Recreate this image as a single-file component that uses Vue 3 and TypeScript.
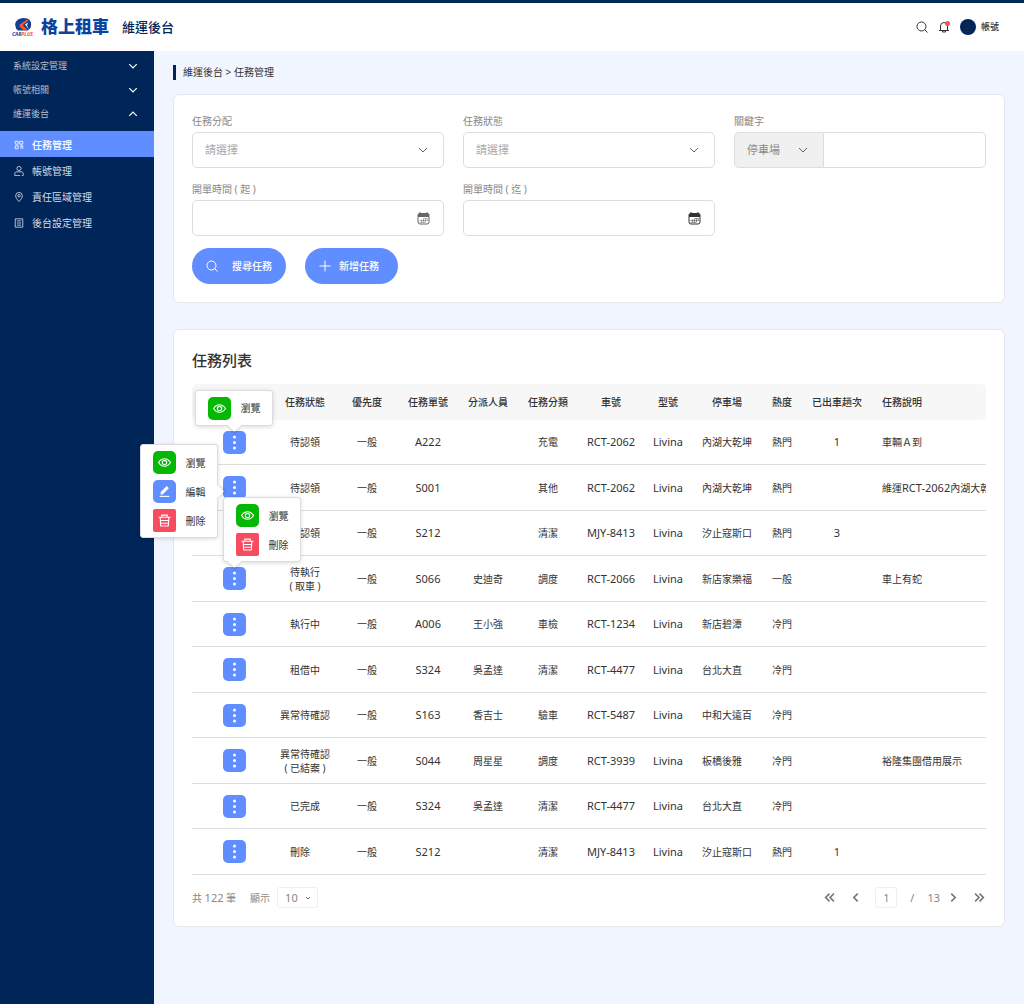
<script setup lang="ts">
import { ref } from 'vue'

type ActionKind = 'view' | 'edit' | 'remove'
type MenuSide = 'above' | 'left' | 'above-start'

interface Task {
  status: string[]
  priority: string
  no: string
  assignee: string
  category: string
  plate: string
  lot: string
  heat: string
  trips: string
  note: string
  menu?: { side: MenuSide; actions: ActionKind[] }
}

const actionLabels: Record<ActionKind, string> = { view: '瀏覽', edit: '編輯', remove: '刪除' }

const groups = [
  { label: '系統設定管理', open: false },
  { label: '帳號相關', open: false },
  { label: '維運後台', open: true },
]

const pages = [
  { label: '任務管理', icon: 'tasks' },
  { label: '帳號管理', icon: 'user' },
  { label: '責任區域管理', icon: 'pin' },
  { label: '後台設定管理', icon: 'list' },
]

const columns = [
  { key: 'action', label: '' },
  { key: 'status', label: '任務狀態' },
  { key: 'priority', label: '優先度' },
  { key: 'no', label: '任務單號' },
  { key: 'assignee', label: '分派人員' },
  { key: 'category', label: '任務分類' },
  { key: 'plate', label: '車號' },
  { key: 'model', label: '型號' },
  { key: 'lot', label: '停車場' },
  { key: 'heat', label: '熱度' },
  { key: 'trips', label: '已出車趟次' },
  { key: 'note', label: '任務說明' },
]

const tasks: Task[] = [
  { status: ['待認領'], priority: '一般', no: 'A222', assignee: '', category: '充電', plate: 'RCT-2062', lot: '內湖大乾坤', heat: '熱門', trips: '1', note: '車輛Ａ到', menu: { side: 'above', actions: ['view'] } },
  { status: ['待認領'], priority: '一般', no: 'S001', assignee: '', category: '其他', plate: 'RCT-2062', lot: '內湖大乾坤', heat: '熱門', trips: '', note: '維運RCT-2062內湖大乾', menu: { side: 'left', actions: ['view', 'edit', 'remove'] } },
  { status: ['待認領'], priority: '一般', no: 'S212', assignee: '', category: '清潔', plate: 'MJY-8413', lot: '汐止寇斯口', heat: '熱門', trips: '3', note: '' },
  { status: ['待執行', '( 取車 )'], priority: '一般', no: 'S066', assignee: '史迪奇', category: '調度', plate: 'RCT-2066', lot: '新店家樂福', heat: '一般', trips: '', note: '車上有蛇', menu: { side: 'above-start', actions: ['view', 'remove'] } },
  { status: ['執行中'], priority: '一般', no: 'A006', assignee: '王小強', category: '車檢', plate: 'RCT-1234', lot: '新店碧潭', heat: '冷門', trips: '', note: '' },
  { status: ['租借中'], priority: '一般', no: 'S324', assignee: '吳孟達', category: '清潔', plate: 'RCT-4477', lot: '台北大直', heat: '冷門', trips: '', note: '' },
  { status: ['異常待確認'], priority: '一般', no: 'S163', assignee: '香吉士', category: '驗車', plate: 'RCT-5487', lot: '中和大遠百', heat: '冷門', trips: '', note: '' },
  { status: ['異常待確認', '( 已結案 )'], priority: '一般', no: 'S044', assignee: '周星星', category: '調度', plate: 'RCT-3939', lot: '板橋後雅', heat: '冷門', trips: '', note: '裕隆集團借用展示' },
  { status: ['已完成'], priority: '一般', no: 'S324', assignee: '吳孟達', category: '清潔', plate: 'RCT-4477', lot: '台北大直', heat: '冷門', trips: '', note: '' },
  { status: ['刪除'], priority: '一般', no: 'S212', assignee: '', category: '清潔', plate: 'MJY-8413', lot: '汐止寇斯口', heat: '熱門', trips: '1', note: '' },
]

const isLatin = (part: string) => /^[\w-]+$/.test(part)
const noteParts = (note: string) => note.split(/([A-Za-z0-9-]+)/).filter(Boolean)

const assign = ref('')
const state = ref('')
const keywordType = ref('停車場')
const keyword = ref('')
const dateFrom = ref('')
const dateTo = ref('')
const pageSize = ref('10')
const page = ref('1')
</script>

<template>
  <div class="app" lang="zh-Hant">
    <header class="topbar">
      <a class="brand" href="#">
        <svg class="emblem" viewBox="0 0 46 36" aria-hidden="true">
          <path d="M7 17C4 7 13 0 23 0c11 0 17 7 15 16-1 5-4 8-8 9H12c-3-2-4-4-5-8z" fill="#123f95" />
          <path d="M30 3 17 12c-3 2-3 4-1 6l8 7h8l-9-9c-1-1-1-2 0-3l10-8z" fill="#f4591f" />
          <path d="m26 13 6-4-2 6 4 8z" fill="#fff" />
          <text x="0" y="35" font-size="10" font-weight="700" font-style="italic" fill="#123f95">CAR<tspan fill="#f4591f">PLUS</tspan></text>
        </svg>
        <span class="brand-name">格上租車</span>
        <span class="brand-sub">維運後台</span>
      </a>
      <div class="tools">
        <button type="button" class="bare" aria-label="搜尋">
          <svg class="i12" viewBox="0 0 24 24"><circle cx="11" cy="11" r="9" /><path d="m17 17 6 6" /></svg>
        </button>
        <button type="button" class="bare" aria-label="通知">
          <svg class="i12" viewBox="0 0 24 24"><path d="M2 19h20M5 19V10a7 7 0 0 1 14 0v9M9 19v3h6v-3" /><circle class="alert" cx="19" cy="5" r="5" /></svg>
        </button>
        <button type="button" class="bare account">
          <span class="avatar">
            <svg viewBox="0 0 24 24"><circle cx="12" cy="7" r="5" /><path d="M2 22v-3c0-3 2-4 5-4h10c3 0 5 1 5 4v3z" /></svg>
          </span>
          帳號
        </button>
      </div>
    </header>

    <div class="body">
      <nav class="sidebar">
        <button v-for="g in groups" :key="g.label" type="button" class="group" :aria-expanded="g.open">
          {{ g.label }}
          <svg viewBox="0 0 16 16"><path :d="g.open ? 'm2 11 6-6 6 6' : 'm2 5 6 6 6-6'" /></svg>
        </button>
        <ul class="pages">
          <li v-for="(p, i) in pages" :key="p.label">
            <a href="#" :class="['page-link', { active: i === 0 }]">
              <svg viewBox="0 0 24 24">
                <g v-if="p.icon === 'tasks'"><path d="M3 3h7v7H3zM3 14h7v7H3zM14 3h7v7h-7zM17 14v7M21 14v7M14 14h7" /></g>
                <g v-else-if="p.icon === 'user'"><circle cx="12" cy="6" r="5" /><path d="M19 23h3v-5c0-3-2-4-5-4H7c-3 0-5 1-5 4v5h13" /></g>
                <g v-else-if="p.icon === 'pin'"><path d="M12 23C7 18 4 13 4 9a8 8 0 0 1 16 0c0 4-3 9-8 14z" /><circle cx="12" cy="9" r="3" /></g>
                <g v-else><path d="M3 2h18v20H3zM7 7h10M7 12h10M7 17h10" /></g>
              </svg>
              {{ p.label }}
            </a>
          </li>
        </ul>
      </nav>

      <main class="content">
        <h1 class="crumbs">維運後台 &gt; 任務管理</h1>

        <form class="card" @submit.prevent>
          <div class="fields">
            <div class="field">
              <label for="assign">任務分配</label>
              <div class="pick">
                <select id="assign" v-model="assign"><option value="">請選擇</option></select>
                <svg viewBox="0 0 12 12"><path d="m2 4 4 4 4-4" /></svg>
              </div>
            </div>
            <div class="field">
              <label for="state">任務狀態</label>
              <div class="pick">
                <select id="state" v-model="state"><option value="">請選擇</option></select>
                <svg viewBox="0 0 12 12"><path d="m2 4 4 4 4-4" /></svg>
              </div>
            </div>
            <div class="field">
              <label for="keyword">關鍵字</label>
              <div class="combo">
                <div class="pick joined">
                  <select v-model="keywordType" aria-label="關鍵字類型"><option>停車場</option></select>
                  <svg viewBox="0 0 12 12"><path d="m2 4 4 4 4-4" /></svg>
                </div>
                <input id="keyword" v-model="keyword" type="text" />
              </div>
            </div>
            <div class="field">
              <label for="from">開單時間 ( 起 )</label>
              <div class="date">
                <input id="from" v-model="dateFrom" type="text" />
                <button type="button" class="bare" aria-label="選擇起始日期">
                  <svg viewBox="0 0 26 26"><path class="fill" d="M5 3h16a3 3 0 0 1 3 3v3H2V6a3 3 0 0 1 3-3z" /><path d="M2 9v11a4 4 0 0 0 4 4h14a4 4 0 0 0 4-4V9M6 0v4M20 0v4" /><path class="thin" d="M13 13h8M5 17h16M5 21h11M9 15v6M13 13v8M17 13v8M21 13v4" /></svg>
                </button>
              </div>
            </div>
            <div class="field">
              <label for="to">開單時間 ( 迄 )</label>
              <div class="date dark">
                <input id="to" v-model="dateTo" type="text" />
                <button type="button" class="bare" aria-label="選擇結束日期">
                  <svg viewBox="0 0 26 26"><path class="fill" d="M5 3h16a3 3 0 0 1 3 3v3H2V6a3 3 0 0 1 3-3z" /><path d="M2 9v11a4 4 0 0 0 4 4h14a4 4 0 0 0 4-4V9M6 0v4M20 0v4" /><path class="thin" d="M13 13h8M5 17h16M5 21h11M9 15v6M13 13v8M17 13v8M21 13v4" /></svg>
                </button>
              </div>
            </div>
          </div>
          <div class="buttons">
            <button type="submit" class="pill">
              <svg viewBox="0 0 24 24"><circle cx="11" cy="11" r="9" /><path d="m17 17 6 6" /></svg>
              <span>搜尋任務</span>
            </button>
            <button type="button" class="pill add">
              <svg viewBox="0 0 24 24"><path d="M12 1v22M1 12h22" /></svg>
              <span>新增任務</span>
            </button>
          </div>
        </form>

        <section class="card">
          <h2 class="title">任務列表</h2>
          <table class="tasks">
            <thead>
              <tr>
                <th v-for="c in columns" :key="c.key" :class="'col-' + c.key" scope="col">{{ c.label }}</th>
              </tr>
            </thead>
            <tbody>
              <tr v-for="(t, i) in tasks" :key="i">
                <td>
                  <div class="more-wrap">
                    <button type="button" class="more" aria-label="更多操作" :aria-expanded="!!t.menu">
                      <svg viewBox="0 0 23 23"><circle cx="11.500" cy="6" r="1.500" /><circle cx="11.500" cy="11.500" r="1.500" /><circle cx="11.500" cy="17" r="1.500" /></svg>
                    </button>
                    <div v-if="t.menu" :class="['menu', t.menu.side]">
                      <button v-for="a in t.menu.actions" :key="a" type="button" class="menu-item">
                        <span :class="['tile', a]">
                          <svg v-if="a === 'view'" viewBox="0 0 24 24"><path d="M1 12c3-5 7-7 11-7s8 2 11 7c-3 5-7 7-11 7s-8-2-11-7z" /><circle cx="12" cy="12" r="4" /></svg>
                          <svg v-else-if="a === 'edit'" viewBox="0 0 24 24"><path class="solid" d="M5 18v-5L16 2l4 4L9 17z" /><path d="M3 21h18" /></svg>
                          <svg v-else viewBox="0 0 24 24"><path d="M1 6h22M7 6V2h10v4M4 6l1 16h14l1-16M5 12h14M6 17h12" /></svg>
                        </span>
                        {{ actionLabels[a] }}
                      </button>
                    </div>
                  </div>
                </td>
                <td class="status"><span v-for="line in t.status" :key="line">{{ line }}</span></td>
                <td>{{ t.priority }}</td>
                <td class="latin">{{ t.no }}</td>
                <td>{{ t.assignee }}</td>
                <td>{{ t.category }}</td>
                <td class="latin">{{ t.plate }}</td>
                <td class="latin">Livina</td>
                <td class="lot">{{ t.lot }}</td>
                <td>{{ t.heat }}</td>
                <td class="latin">{{ t.trips }}</td>
                <td class="note"><span v-for="(part, n) in noteParts(t.note)" :key="n" :class="{ latin: isLatin(part) }">{{ part }}</span></td>
              </tr>
            </tbody>
          </table>

          <footer class="pager">
            <span>共 <span class="latin">122</span> 筆</span>
            <label for="size">顯示</label>
            <div class="pick small">
              <select id="size" v-model="pageSize"><option>10</option></select>
              <svg viewBox="0 0 8 8"><path d="m2 3 2 2 2-2" /></svg>
            </div>
            <div class="steps">
              <button type="button" class="bare" aria-label="第一頁"><svg viewBox="0 0 20 20"><path d="m10 3-7 7 7 7M18 3l-7 7 7 7" /></svg></button>
              <button type="button" class="bare prev" aria-label="上一頁"><svg viewBox="0 0 20 20"><path d="m14 3-7 7 7 7" /></svg></button>
              <input v-model="page" class="latin" type="text" aria-label="頁碼" />
              <span class="latin slash">/</span>
              <span class="latin">13</span>
              <button type="button" class="bare next" aria-label="下一頁"><svg viewBox="0 0 20 20"><path d="m6 3 7 7-7 7" /></svg></button>
              <button type="button" class="bare" aria-label="最後一頁"><svg viewBox="0 0 20 20"><path d="m2 3 7 7-7 7M10 3l7 7-7 7" /></svg></button>
            </div>
          </footer>
        </section>
      </main>
    </div>
  </div>
</template>

<style>
body {
  background: #f0f5ff;
}
</style>

<style scoped>
.app,
.app * {
  box-sizing: border-box;
}
.app {
  display: flex;
  flex-direction: column;
  min-height: 100vh;
  background: #f0f5ff;
  color: #333;
  font: 10px/14px "Noto Sans", "Noto Sans CJK TC", sans-serif;
}
button,
input,
select {
  margin: 0;
  padding: 0;
  border: 0;
  background: none;
  color: inherit;
  font: inherit;
}
button,
select {
  cursor: pointer;
}
a {
  color: inherit;
  text-decoration: none;
}
svg {
  display: block;
  flex: none;
  fill: none;
  stroke: currentColor;
  stroke-width: 2;
}
.bare {
  display: flex;
  align-items: center;
}
.app .latin {
  font-size: 11px;
}

.topbar {
  display: flex;
  align-items: center;
  justify-content: space-between;
  height: 51px;
  padding: 0 25px 0 12px;
  border-top: 3px solid #002558;
  background: #fff;
}
.brand {
  display: flex;
  align-items: center;
  line-height: 24px;
}
.emblem {
  width: 23px;
  height: 18px;
  overflow: visible;
  stroke: none;
}
.brand-name {
  margin: 0 13px 0 6px;
  color: #0a449f;
  font-size: 17px;
  font-weight: 900;
}
.brand-sub {
  color: #002558;
  font-size: 13px;
  font-weight: 500;
}
.tools {
  display: flex;
  align-items: center;
  gap: 10px;
}
.i12 {
  width: 12px;
  height: 12px;
}
.alert {
  fill: #ff4d63;
  stroke: none;
}
.account {
  gap: 5px;
  font-size: 9px;
  font-weight: 500;
}
.avatar {
  display: grid;
  place-items: center;
  width: 16px;
  height: 16px;
  border-radius: 50%;
  background: #002558;
  color: #1f2c45;
}
.avatar svg {
  width: 9px;
  height: 9px;
}

.body {
  display: flex;
  flex: 1;
}
.sidebar {
  flex: none;
  width: 154px;
  padding-top: 3px;
  background: #002558;
  color: #d5dbe6;
}
.group {
  display: flex;
  align-items: center;
  justify-content: space-between;
  width: 100%;
  height: 24px;
  padding: 0 16px 0 13px;
  color: #b3bdcc;
  font-size: 9px;
}
.group svg {
  width: 10px;
  height: 10px;
  color: #fff;
}
.pages {
  margin: 5px 0 0;
  padding: 0;
  list-style: none;
}
.page-link {
  display: flex;
  align-items: center;
  gap: 8px;
  height: 26px;
  padding: 2px 0 0 14px;
}
.page-link svg {
  width: 10px;
  height: 10px;
}
.page-link.active {
  background: #608dff;
  color: #fff;
  font-weight: 500;
}

.content {
  flex: 1;
  min-width: 0;
  padding: 14px 19px;
}
.crumbs {
  margin: 0 0 14px;
  padding-left: 7px;
  border-left: 3px solid #002558;
  font-size: 10px;
  font-weight: 400;
  line-height: 15px;
}
.card {
  margin-bottom: 26px;
  padding: 18px;
  border: 1px solid #e4e7ed;
  border-radius: 6px;
  background: #fff;
}

.fields {
  display: grid;
  grid-template-columns: repeat(3, minmax(0, 1fr));
  gap: 13px 19px;
}
.field {
  display: flex;
  flex-direction: column;
  gap: 3px;
  color: #888;
}
.field label {
  line-height: 16px;
}
.pick {
  display: grid;
  align-items: center;
}
.pick select,
.pick svg {
  grid-area: 1 / 1;
}
.pick select {
  width: 100%;
  height: 36px;
  padding: 0 12px;
  border: 1px solid #ddd;
  border-radius: 5px;
  appearance: none;
  color: #aaa;
  font-size: 11px;
}
.pick svg {
  justify-self: end;
  width: 12px;
  height: 12px;
  margin-right: 15px;
  color: #666;
  stroke-width: 1;
  pointer-events: none;
}
.combo {
  display: flex;
}
.combo input {
  flex: 1;
  min-width: 0;
  height: 36px;
  padding: 0 12px;
  border: 1px solid #ddd;
  border-left: 0;
  border-radius: 0 5px 5px 0;
}
.pick.joined {
  width: 90px;
}
.pick.joined select {
  border-radius: 5px 0 0 5px;
  background: #f0f0f0;
  color: #888;
}
.date {
  display: flex;
  align-items: center;
  height: 36px;
  padding: 0 13px 0 12px;
  border: 1px solid #ddd;
  border-radius: 5px;
  color: #666;
}
.date input {
  flex: 1;
  min-width: 0;
  height: 100%;
}
.date svg {
  width: 13px;
  height: 13px;
}
.date .fill {
  fill: currentColor;
}
.date .thin {
  stroke-width: 1;
}
.date.dark {
  color: #333;
}
.buttons {
  display: flex;
  gap: 19px;
  margin-top: 12px;
}
.pill {
  display: flex;
  align-items: center;
  gap: 14px;
  height: 36px;
  padding: 0 14px;
  border-radius: 18px;
  background: #608dff;
  color: #fff;
  font-weight: 500;
}
.pill svg {
  width: 12px;
  height: 12px;
}
.pill.add {
  gap: 8px;
  padding: 0 19px 0 14px;
}

.title {
  margin: 0 0 12px;
  font-size: 15px;
  font-weight: 500;
  line-height: 24px;
}
.tasks {
  width: 100%;
  border-spacing: 0;
  table-layout: fixed;
  text-align: center;
}
.tasks th {
  height: 36px;
  padding: 0;
  background: #f7f7f7;
  font-weight: 500;
}
.tasks th:first-child {
  border-radius: 5px 0 0 5px;
}
.tasks th:last-child {
  border-radius: 0 5px 5px 0;
}
.tasks td {
  height: 45px;
  padding: 0;
  border-bottom: 1px solid #ddd;
}
.tasks tr:nth-child(even) td {
  height: 46px;
}
.col-action { width: 84px; }
.col-status { width: 58px; }
.col-priority { width: 66px; }
.col-no { width: 56px; }
.col-assignee { width: 64px; }
.col-category { width: 56px; }
.col-plate { width: 70px; }
.col-model { width: 44px; }
.col-lot { width: 74px; }
.col-heat { width: 36px; }
.col-trips { width: 74px; }
.tasks .col-note,
.tasks .note {
  padding-left: 8px;
  text-align: left;
}
.tasks .note {
  overflow: hidden;
  white-space: nowrap;
}
.tasks .lot {
  padding-left: 12px;
  text-align: left;
}
.status span {
  display: block;
  width: fit-content;
  min-width: 30px;
  margin: 0 auto;
  text-align: left;
  white-space: nowrap;
}

.more-wrap {
  position: relative;
  width: 23px;
  margin: 0 auto;
}
.more {
  display: block;
  width: 23px;
  height: 23px;
  border-radius: 5px;
  background: #608dff;
}
.more svg {
  width: 23px;
  height: 23px;
  fill: #fff;
  stroke: none;
}
.menu {
  position: absolute;
  z-index: 2;
  display: flex;
  flex-direction: column;
  gap: 6px;
  width: 78px;
  padding: 6px 0 5px 12px;
  border: 1px solid #ddd;
  border-radius: 3px;
  background: #fff;
  box-shadow: 0 1px 4px rgb(0 0 0 / 15%);
}
.menu::after {
  position: absolute;
  width: 9px;
  height: 9px;
  background: #fff;
  box-shadow: 2px 2px 2px rgb(0 0 0 / 10%);
  content: "";
  transform: rotate(45deg);
}
.menu.above {
  bottom: 28px;
  left: -28px;
}
.menu.above-start {
  bottom: 28px;
  left: 0;
}
.menu.left {
  top: -32px;
  right: 28px;
}
.menu.above::after {
  bottom: -5px;
  left: 34px;
}
.menu.above-start::after {
  bottom: -5px;
  left: 6px;
}
.menu.left::after {
  top: 42px;
  right: -5px;
  box-shadow: 2px -2px 2px rgb(0 0 0 / 10%);
}
.menu-item {
  display: flex;
  align-items: center;
  gap: 10px;
}
.tile {
  display: grid;
  place-items: center;
  width: 23px;
  height: 23px;
  border-radius: 5px;
  background: #608dff;
  color: #fff;
}
.tile svg {
  width: 13px;
  height: 13px;
}
.tile.view {
  background: #06b806;
}
.tile.remove {
  border-radius: 2px;
  background: #f74b60;
}
.tile .solid {
  fill: currentColor;
  stroke: none;
}

.pager {
  display: flex;
  align-items: center;
  margin-top: 12px;
  color: #888;
}
.pager label {
  margin: 0 7px 0 14px;
}
.pick.small select {
  width: 41px;
  height: 21px;
  padding: 0 7px;
  border-color: #eee;
  border-radius: 3px;
  color: #888;
}
.pick.small svg {
  width: 8px;
  height: 8px;
  margin-right: 6px;
}
.steps {
  display: flex;
  align-items: center;
  margin-left: auto;
  padding-right: 1px;
}
.steps svg {
  width: 11px;
  height: 11px;
  color: #777;
  stroke-width: 3;
}
.steps .prev {
  margin: 0 14px 0 15px;
}
.steps .next {
  margin: 0 15px 0 8px;
}
.steps input {
  width: 22px;
  height: 21px;
  border: 1px solid #eee;
  border-radius: 3px;
  text-align: center;
}
.slash {
  margin: 0 13px;
}
</style>
